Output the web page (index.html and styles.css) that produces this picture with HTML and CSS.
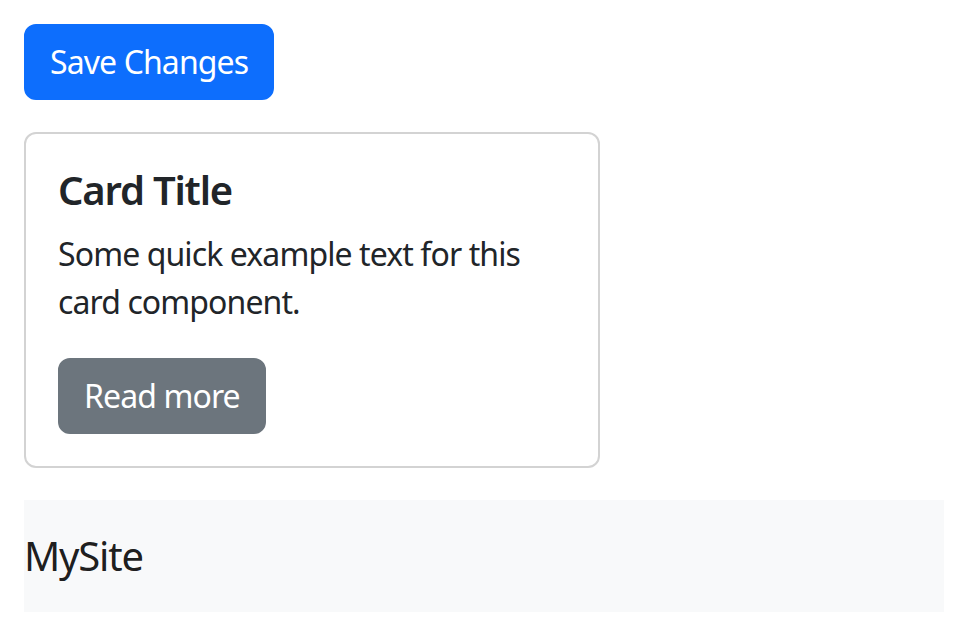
FILE: index.html
```html
<!DOCTYPE html>
<html lang="en">
<head>
<meta charset="utf-8">
<title>Demo</title>
<link rel="stylesheet" href="styles.css">
</head>
<body>
<div class="page">
  <button class="btn btn-primary">Save Changes</button>
  <div class="card">
    <div class="card-body">
      <h5 class="card-title">Card Title</h5>
      <p class="card-text">Some quick example text for this card component.</p>
      <a class="btn btn-secondary" href="#">Read more</a>
    </div>
  </div>
  <nav class="navbar">
    <a class="navbar-brand" href="#">MySite</a>
  </nav>
</div>
</body>
</html>
```
FILE: styles.css
```css
* { box-sizing: border-box; }
html, body { margin: 0; padding: 0; background: #fff; }
body {
  font-family: "Noto Sans", "Open Sans", sans-serif;
  font-size: 32px;
  line-height: 1.5;
  color: #212529;
  letter-spacing: -0.9px;
}
.page {
  padding: 24px;
  display: flex;
  flex-direction: column;
  align-items: flex-start;
  gap: 32px;
}
.btn {
  display: inline-block;
  font-family: inherit;
  font-size: 32px;
  letter-spacing: -0.9px;
  line-height: 48px;
  padding: 12px 24px;
  border: 2px solid transparent;
  border-radius: 12px;
  color: #fff;
  text-decoration: none;
  cursor: pointer;
}
.btn-primary { background: #0d6efd; border-color: #0d6efd; }
.btn-secondary { background: #6c757d; border-color: #6c757d; }
.card {
  width: 576px;
  border: 2px solid #d3d3d3;
  border-radius: 12px;
  background: #fff;
}
.card-body { padding: 32px; }
.card-title {
  margin: 0 0 16px;
  font-size: 40px;
  font-weight: 600;
  line-height: 48px;
  letter-spacing: -1.2px;
}
.card-text { margin: 0 0 32px; }
.navbar {
  align-self: stretch;
  background: #f8f9fa;
  padding: 16px 0;
}
.navbar-brand {
  display: inline-block;
  font-size: 40px;
  line-height: 60px;
  padding: 10px 0;
  color: rgba(0,0,0,.9);
  text-decoration: none;
  letter-spacing: -1.2px;
}
```
